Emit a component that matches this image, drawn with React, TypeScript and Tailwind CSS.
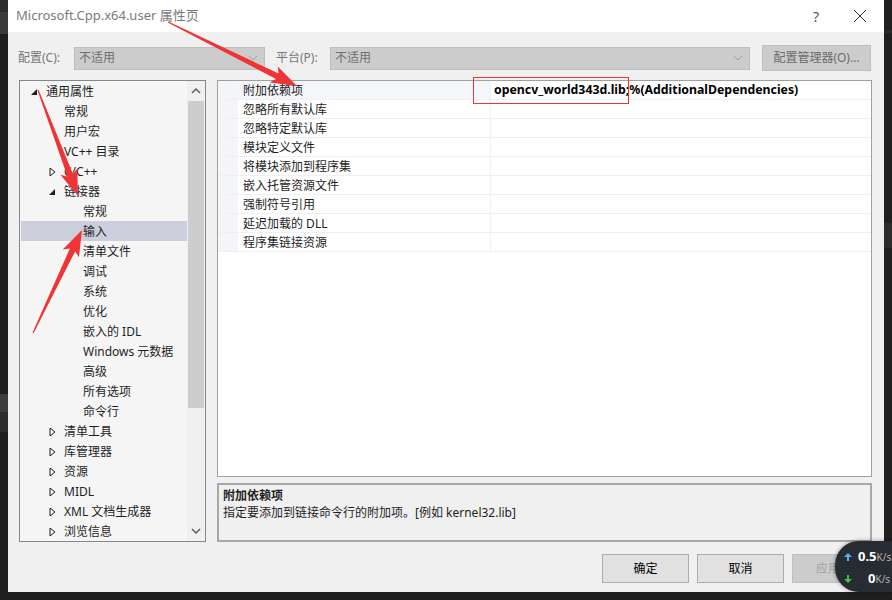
import React from 'react';

type TreeItem = { label: string; level: number; arrow?: 'open' | 'closed'; selected?: boolean };

const tree: TreeItem[] = [
  { label: '通用属性', level: 0, arrow: 'open' },
  { label: '常规', level: 1 },
  { label: '用户宏', level: 1 },
  { label: 'VC++ 目录', level: 1 },
  { label: 'C/C++', level: 1, arrow: 'closed' },
  { label: '链接器', level: 1, arrow: 'open' },
  { label: '常规', level: 2 },
  { label: '输入', level: 2, selected: true },
  { label: '清单文件', level: 2 },
  { label: '调试', level: 2 },
  { label: '系统', level: 2 },
  { label: '优化', level: 2 },
  { label: '嵌入的 IDL', level: 2 },
  { label: 'Windows 元数据', level: 2 },
  { label: '高级', level: 2 },
  { label: '所有选项', level: 2 },
  { label: '命令行', level: 2 },
  { label: '清单工具', level: 1, arrow: 'closed' },
  { label: '库管理器', level: 1, arrow: 'closed' },
  { label: '资源', level: 1, arrow: 'closed' },
  { label: 'MIDL', level: 1, arrow: 'closed' },
  { label: 'XML 文档生成器', level: 1, arrow: 'closed' },
  { label: '浏览信息', level: 1, arrow: 'closed' },
];

const props = [
  '附加依赖项',
  '忽略所有默认库',
  '忽略特定默认库',
  '模块定义文件',
  '将模块添加到程序集',
  '嵌入托管资源文件',
  '强制符号引用',
  '延迟加载的 DLL',
  '程序集链接资源',
];

const indent = ['pl-[7px]', 'pl-[25px]', 'pl-[44px]'];

function Arrow({ kind }: { kind?: 'open' | 'closed' }) {
  return (
    <span className="w-[12px] h-[20px] flex items-center justify-center mr-[6px]">
      {kind === 'open' && (
        <svg width="8" height="8" viewBox="0 0 8 8">
          <path d="M7 1 L7 7 L1 7 Z" fill="#1e1e1e" />
        </svg>
      )}
      {kind === 'closed' && (
        <svg width="7" height="10" viewBox="0 0 7 10">
          <path d="M1 1 L6 5 L1 9 Z" fill="none" stroke="#1e1e1e" strokeWidth="1" />
        </svg>
      )}
    </span>
  );
}

function arrowPoints(x1: number, y1: number, x2: number, y2: number) {
  const len = Math.hypot(x2 - x1, y2 - y1);
  const dx = (x2 - x1) / len;
  const dy = (y2 - y1) / len;
  const nx = -dy;
  const ny = dx;
  const hl = 26;
  const bx = x2 - dx * hl;
  const by = y2 - dy * hl;
  const pts: [number, number][] = [
    [x1 + nx * 0.6, y1 + ny * 0.6],
    [bx + dx * 4 + nx * 3, by + dy * 4 + ny * 3],
    [bx + nx * 9, by + ny * 9],
    [x2, y2],
    [bx - nx * 9, by - ny * 9],
    [bx + dx * 4 - nx * 3, by + dy * 4 - ny * 3],
    [x1 - nx * 0.6, y1 - ny * 0.6],
  ];
  return pts.map((p) => p.join(',')).join(' ');
}

export default function App() {
  return (
    <div className="relative w-[892px] h-[600px] overflow-hidden bg-[#1e1e1e] flex font-['Noto_Sans','Noto_Sans_CJK_SC',sans-serif] text-[12px] text-[#1e1e1e]">
      {/* editor behind, left edge */}
      <div className="w-[8px] flex flex-col">
        <div className="h-[12px] bg-[#2d2d30]" />
        <div className="h-[22px] bg-[#3a3a3d]" />
        <div className="h-[360px]" />
        <div className="h-[18px] bg-[#3c3c3c]" />
        <div className="h-[20px] bg-[#2d2d30]" />
      </div>

      {/* dialog */}
      <div className="w-[876px] h-[592px] flex flex-col bg-[#f0f0f0]">
        <div className="h-[32px] bg-white flex items-center pl-[8px] pr-[10px]">
          <span className="text-[13px] text-[#7a7a7a] flex-1">Microsoft.Cpp.x64.user 属性页</span>
          <span className="text-[14px] text-[#555] w-[20px] text-center mr-[27px]">?</span>
          <svg width="14" height="14" viewBox="0 0 14 14" className="mr-[7px]">
            <path d="M1 1 L13 13 M13 1 L1 13" stroke="#333" strokeWidth="1" />
          </svg>
        </div>

        <div className="flex items-center h-[26px] mt-[13px] pl-[10px]">
          <span className="w-[56px] text-[#777]">配置(C):</span>
          <div className="w-[191px] h-[23px] bg-[#cccccc] border border-[#bdbdbd] flex items-center pl-[4px] pr-[6px]">
            <span className="flex-1 text-[#6d6d6d]">不适用</span>
            <svg width="10" height="6" viewBox="0 0 10 6"><path d="M1 1 L5 5 L9 1" fill="none" stroke="#a0a0a0" /></svg>
          </div>
          <span className="w-[65px] pl-[11px] text-[#777]">平台(P):</span>
          <div className="w-[420px] h-[23px] bg-[#cccccc] border border-[#bdbdbd] flex items-center pl-[4px] pr-[6px]">
            <span className="flex-1 text-[#6d6d6d]">不适用</span>
            <svg width="10" height="6" viewBox="0 0 10 6"><path d="M1 1 L5 5 L9 1" fill="none" stroke="#a0a0a0" /></svg>
          </div>
          <div className="ml-[12px] w-[109px] h-[26px] bg-[#cccccc] border border-[#bfbfbf] flex items-center justify-center text-[#6d6d6d]">
            配置管理器(O)...
          </div>
        </div>

        <div className="flex mt-[9px] pl-[11px]">
          {/* tree */}
          <div className="w-[187px] h-[462px] border border-[#828790] bg-[#f5f5f5] flex overflow-hidden">
            <div className="flex-1 flex flex-col pl-[1px]">
              {tree.map((t, i) => (
                <div
                  key={i}
                  className={`h-[20px] shrink-0 flex items-center pt-[1px] ${indent[t.level]} ${t.selected ? 'bg-[#cccedb]' : ''}`}
                >
                  <Arrow kind={t.arrow} />
                  <span className="whitespace-nowrap">{t.label}</span>
                </div>
              ))}
            </div>
            <div className="w-[18px] flex flex-col bg-[#f0f0f0]">
              <div className="h-[20px] flex items-center justify-center">
                <svg width="10" height="6" viewBox="0 0 10 6"><path d="M1 5 L5 1 L9 5" fill="none" stroke="#606060" strokeWidth="1.5" /></svg>
              </div>
              <div className="h-[307px] mx-[1px] bg-[#cdcdcd]" />
              <div className="flex-1" />
              <div className="h-[20px] flex items-center justify-center">
                <svg width="10" height="6" viewBox="0 0 10 6"><path d="M1 1 L5 5 L9 1" fill="none" stroke="#606060" strokeWidth="1.5" /></svg>
              </div>
            </div>
          </div>

          {/* right side */}
          <div className="ml-[11px] flex flex-col">
            <div className="w-[655px] h-[397px] border border-[#a0a0a0] bg-white flex flex-col">
              {props.map((p, i) => (
                <div key={i} className="h-[19px] shrink-0 flex border-b border-[#f0f0f0]">
                  <div className="w-[20px] bg-[#f3f5f9]" />
                  <div className={`w-[253px] pl-[5px] pt-[1px] flex items-center border-r border-[#f0f0f0] ${i === 0 ? 'bg-[#f5f6fa]' : ''}`}>
                    {p}
                  </div>
                  <div className="flex-1 pl-[3px] pt-[1px] flex items-center font-bold text-black text-[12.3px]">
                    {i === 0 ? 'opencv_world343d.lib;%(AdditionalDependencies)' : ''}
                  </div>
                </div>
              ))}
            </div>
            <div className="mt-[6px] w-[655px] h-[59px] border-2 border-[#a8a8a8] bg-[#f0f0f0] pl-[4px] pt-[2px] flex flex-col">
              <span className="font-bold h-[17px] leading-[17px]">附加依赖项</span>
              <span className="h-[17px] leading-[17px]">指定要添加到链接命令行的附加项。[例如 kernel32.lib]</span>
            </div>
          </div>
        </div>

        <div className="flex mt-[12px] pl-[594px] gap-[8px]">
          <div className="w-[87px] h-[29px] bg-[#e1e1e1] border border-[#adadad] flex items-center justify-center text-black">确定</div>
          <div className="w-[87px] h-[29px] bg-[#e1e1e1] border border-[#adadad] flex items-center justify-center text-black">取消</div>
          <div className="w-[87px] h-[29px] bg-[#cccccc] border border-[#bfbfbf] flex items-center justify-center text-[#a0a0a0]">应用(A)</div>
        </div>
      </div>

      {/* editor behind, right edge */}
      <div className="w-[8px] flex flex-col bg-[#1f1f1f]">
        <div className="h-[30px]" />
        <div className="h-[3px] bg-[#2a2a2a]" />
        <div className="h-[190px]" />
        <div className="h-[25px] bg-[#2b2b2b]" />
      </div>

      {/* network speed widget */}
      <div className="absolute left-[835px] top-[541px] w-[80px] h-[51px] rounded-l-[24px] bg-[#272b32] shadow-[0_0_4px_rgba(0,0,0,0.4)] flex flex-col justify-center pl-[9px] gap-[4px]">
        <div className="flex items-baseline h-[18px]">
          <svg width="8" height="8" viewBox="0 0 8 8" className="mr-[6px]"><path d="M4 0 L8 4 L5 4 L5 8 L3 8 L3 4 L0 4 Z" fill="#4fb4f0" /></svg>
          <span className="text-white font-bold text-[13px]">0.5</span>
          <span className="text-[#b0b4ba] text-[10px]">K/s</span>
        </div>
        <div className="flex items-baseline h-[18px]">
          <svg width="8" height="8" viewBox="0 0 8 8" className="mr-[14px]"><path d="M4 8 L8 4 L5 4 L5 0 L3 0 L3 4 L0 4 Z" fill="#3ec43e" /></svg>
          <span className="text-white font-bold text-[13px] ml-[2px]">0</span>
          <span className="text-[#b0b4ba] text-[10px]">K/s</span>
        </div>
      </div>

      {/* annotation overlay */}
      <svg className="absolute inset-0 pointer-events-none" width="892" height="600" viewBox="0 0 892 600">
        <rect x="473.5" y="77.5" width="155" height="26" fill="none" stroke="#ee3434" strokeWidth="1" />
        <polygon points={arrowPoints(168, 22, 297, 86)} fill="#ee3434" />
        <polygon points={arrowPoints(38, 90, 78, 196)} fill="#ee3434" />
        <polygon points={arrowPoints(33, 333, 82, 230)} fill="#ee3434" />
      </svg>
    </div>
  );
}
